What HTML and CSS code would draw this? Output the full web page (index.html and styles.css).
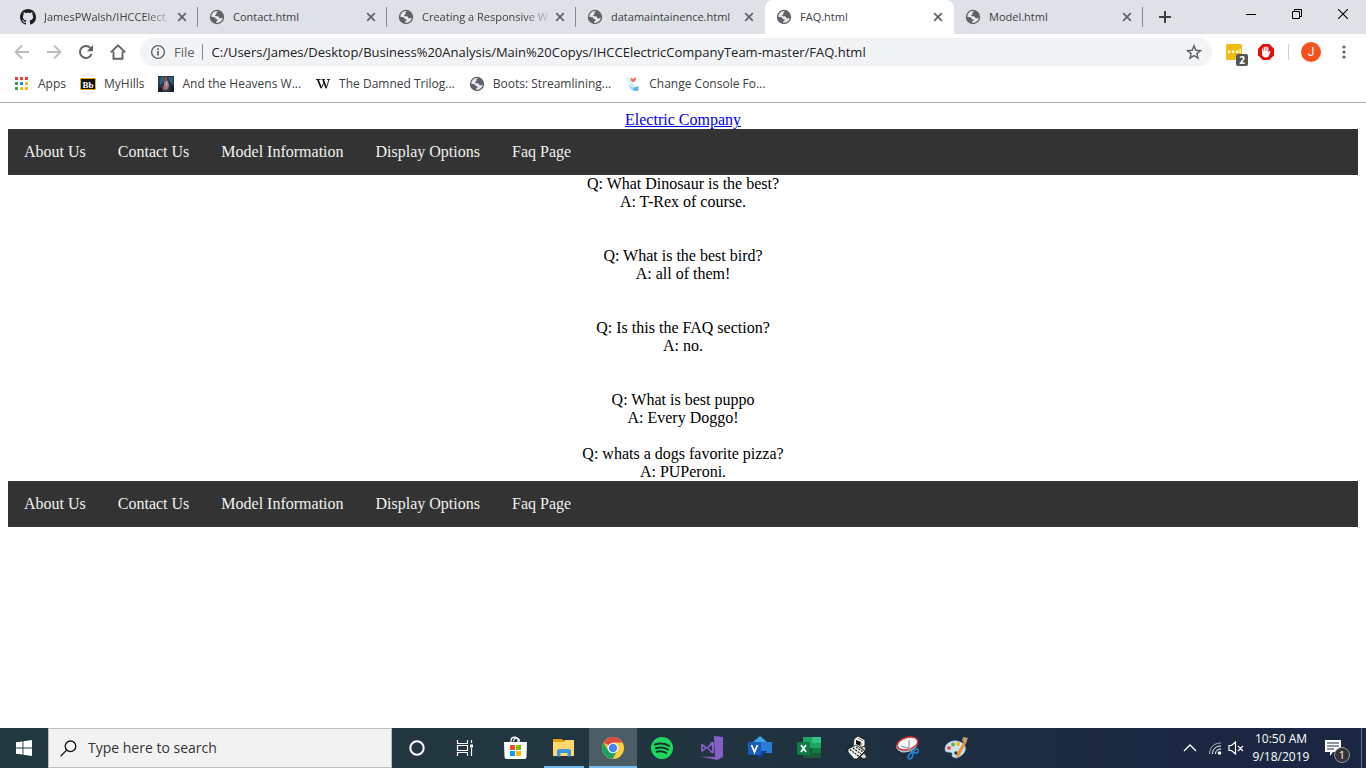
FILE: index.html
```html
<!DOCTYPE html>
<html lang="en">
<head>
<meta charset="utf-8">
<title>FAQ.html</title>
<link rel="stylesheet" href="styles.css">
</head>
<body>
<svg class="defs" aria-hidden="true">
  <symbol id="globe" viewBox="0 0 16 16"><circle cx="8" cy="8" r="7.2" fill="#5f6368"/><path d="M9.3 2.2C8 2.4 7.200 3.400 7.500 4.500c.2.9-1 1-1.300 1.700-.3.8.6 1.200 1.600 1.100 1.300-.1 2.200.2 2.300 1.200.1.800 1 .9 1.900.800.8-.1 1.500-.1 1.800-.8A5.800 5.800 0 0 1 7 13.700c-.1-.8.3-1.600 1.100-1.800.9-.3.700-1.500-.3-1.700-1.400-.2-1.500-1.800-2.700-2L2.200 7.800A5.900 5.900 0 0 1 9.300 2.200z" fill="#e8eaed"/></symbol>
  <symbol id="close" viewBox="0 0 10 10"><path d="M1.200 1.200l7.600 7.600M8.800 1.200L1.200 8.800" stroke="#5f6368" stroke-width="1.700"/></symbol>
</svg>
<div class="screen">
  <header class="browser">
    <div class="tabstrip">
      <div class="tab">
        <svg class="icon16" viewBox="0 0 16 16"><path fill="#1b1f23" d="M8 0C3.580 0 0 3.580 0 8c0 3.540 2.290 6.530 5.470 7.590.4.070.55-.17.55-.38 0-.19-.01-.82-.01-1.490-2.010.37-2.530-.49-2.690-.94-.09-.23-.48-.94-.82-1.130-.28-.15-.68-.52-.01-.53.63-.01 1.080.58 1.230.82.72 1.210 1.870.87 2.330.66.070-.52.280-.87.510-1.070-1.780-.2-3.640-.89-3.640-3.950 0-.87.310-1.590.82-2.150-.08-.2-.36-1.020.08-2.120 0 0 .67-.21 2.200.82.640-.18 1.320-.27 2-.27s1.360.09 2 .27c1.530-1.040 2.200-.82 2.200-.82.440 1.100.160 1.920.080 2.120.51.560.82 1.270.82 2.150 0 3.070-1.870 3.750-3.650 3.950.29.25.54.730.54 1.480 0 1.070-.01 1.930-.01 2.200 0 .21.15.46.55.38A8.010 8.010 0 0 0 16 8c0-4.420-3.580-8-8-8z"/></svg>
        <a class="tab-title fade" href="#">JamesPWalsh/IHCCElect</a>
        <button class="tab-close" aria-label="Close tab"><svg><use href="#close"/></svg></button>
      </div>
      <div class="tab">
        <svg class="icon16"><use href="#globe"/></svg>
        <a class="tab-title" href="#">Contact.html</a>
        <button class="tab-close" aria-label="Close tab"><svg><use href="#close"/></svg></button>
      </div>
      <div class="tab">
        <svg class="icon16"><use href="#globe"/></svg>
        <a class="tab-title fade" href="#">Creating a Responsive W</a>
        <button class="tab-close" aria-label="Close tab"><svg><use href="#close"/></svg></button>
      </div>
      <div class="tab before-active">
        <svg class="icon16"><use href="#globe"/></svg>
        <a class="tab-title" href="#">datamaintainence.html</a>
        <button class="tab-close" aria-label="Close tab"><svg><use href="#close"/></svg></button>
      </div>
      <div class="tab active">
        <svg class="icon16"><use href="#globe"/></svg>
        <a class="tab-title" href="#">FAQ.html</a>
        <button class="tab-close" aria-label="Close tab"><svg><use href="#close"/></svg></button>
      </div>
      <div class="tab">
        <svg class="icon16"><use href="#globe"/></svg>
        <a class="tab-title" href="#">Model.html</a>
        <button class="tab-close" aria-label="Close tab"><svg><use href="#close"/></svg></button>
      </div>
      <button class="new-tab" aria-label="New tab"><svg width="12" height="12" viewBox="0 0 12 12"><path d="M6 0v12M0 6h12" stroke="#3c4043" stroke-width="2"/></svg></button>
      <div class="window-buttons">
        <button aria-label="Minimize"><svg width="10" height="10" viewBox="0 0 10 10"><path d="M0 5.500h10" stroke="#000"/></svg></button>
        <button aria-label="Restore"><svg width="10" height="10" viewBox="0 0 10 10"><path d="M.5 2.500h7v7h-7zM2.500 2.500v-2h7v7h-2" fill="none" stroke="#000"/></svg></button>
        <button aria-label="Close"><svg width="10" height="10" viewBox="0 0 10 10"><path d="M0 0l10 10M10 0L0 10" stroke="#000" stroke-width="1.100"/></svg></button>
      </div>
    </div>

    <div class="toolbar">
      <div class="nav-buttons">
        <button aria-label="Back"><svg width="16" height="16" viewBox="0 0 16 16"><path d="M15 8H2M8 1.500L1.500 8 8 14.500" fill="none" stroke="#babcbe" stroke-width="1.800"/></svg></button>
        <button aria-label="Forward"><svg width="16" height="16" viewBox="0 0 16 16"><path d="M1 8h13M8 1.500L14.500 8 8 14.500" fill="none" stroke="#babcbe" stroke-width="1.800"/></svg></button>
        <button aria-label="Reload"><svg width="16" height="16" viewBox="0 0 16 16"><path d="M13.600 10A6 6 0 1 1 12.400 3.900" fill="none" stroke="#5f6368" stroke-width="2"/><path d="M15 1v6.200H8.800z" fill="#5f6368"/></svg></button>
        <button aria-label="Home"><svg width="16" height="16" viewBox="0 0 16 16"><path d="M3.500 7.500v7.300h9V7.500M.8 8.400L8 1.400l7.200 7" fill="none" stroke="#5f6368" stroke-width="1.900"/></svg></button>
      </div>
      <div class="omnibox">
        <svg width="16" height="16" viewBox="0 0 16 16"><circle cx="8" cy="8" r="6.400" fill="none" stroke="#5f6368" stroke-width="1.400"/><path d="M8 7v4.500M8 4.300v1.600" stroke="#5f6368" stroke-width="1.700"/></svg>
        <label class="scheme" for="address">File</label>
        <input id="address" type="text" value="C:/Users/James/Desktop/Business%20Analysis/Main%20Copys/IHCCElectricCompanyTeam-master/FAQ.html">
        <button aria-label="Bookmark this page"><svg width="16" height="16" viewBox="0 0 16 16"><path d="M8 1.900l1.800 4.300 4.700.4-3.600 3 1.100 4.500L8 11.700l-4 2.400 1.100-4.500-3.600-3 4.700-.4z" fill="none" stroke="#5f6368" stroke-width="1.500"/></svg></button>
      </div>
      <div class="extensions">
        <button class="notes" aria-label="Notes extension"><svg width="16" height="16" viewBox="0 0 16 16"><rect width="16" height="16" rx="1.500" fill="#f0bd12"/><path d="M2 6.500h2.500V9H2zM6 6.500h2.500V9H6zM10 6.500h2.500V9H10zM13.500 5H15v4h-1.500z" fill="#fff7d0"/></svg><span class="badge">2</span></button>
        <button aria-label="Ad blocker"><svg width="16" height="16" viewBox="0 0 16 16"><path d="M4.700 0h6.600L16 4.700v6.600L11.300 16H4.700L0 11.300V4.700z" fill="#e40d0d"/><path d="M4 8.200V5.100c0-.9 1.200-.9 1.200 0V7h.5V3.500c0-1 1.300-1 1.300 0V7h.4V2.900c0-1 1.300-1 1.300 0V7h.5V3.600c0-1 1.200-1 1.200 0v5.200l.8-1.300c.5-.8 1.500-.3 1.100.5L11 11.600c-.6 1.400-1.500 1.900-3 1.900-2.700 0-4-1.500-4-3.800z" fill="#fff"/></svg></button>
      </div>
      <button class="avatar" aria-label="Profile J">J</button>
      <button class="menu" aria-label="Menu"><svg width="4" height="16" viewBox="0 0 4 16"><g fill="#5f6368"><circle cx="2" cy="3" r="1.600"/><circle cx="2" cy="8" r="1.600"/><circle cx="2" cy="13" r="1.600"/></g></svg></button>
    </div>

    <nav class="bookmarks" aria-label="Bookmarks">
      <a href="#"><svg class="icon16" viewBox="0 0 16 16"><path d="M1 1h3v3H1zM6 1h3v3H6zM11 1h3v3h-3z" fill="#ea4335"/><path d="M1 6h3v3H1zM1 11h3v3H1z" fill="#34a853"/><path d="M6 6h3v3H6z" fill="#1a85f0"/><path d="M11 6h3v3h-3zM6 11h3v3H6zM11 11h3v3h-3z" fill="#fbb90c"/></svg>Apps</a>
      <a href="#"><svg class="icon16" viewBox="0 0 16 16"><rect x=".5" y="2.500" width="15" height="11" fill="#111" stroke="#e9b515"/><text x="8" y="11.500" text-anchor="middle" class="bb">Bb</text></svg>MyHills</a>
      <a href="#"><svg class="icon16" viewBox="0 0 16 16"><path fill="#29374c" d="M0 0h16v16H0z"/><path d="M1 2l5-2 1 5-5 4zM10 1h5v7l-4-3z" fill="#315d78"/><path d="M7 3l3 2 1 5-2 4-4-1 1-5z" fill="#a37d83"/><path d="M7 1h2v4H7zM5 10l2 1-1 4H4z" fill="#c3473f"/><path d="M0 11l4 1 2 4H0zM13 9l3 1v6h-4z" fill="#171d32"/><path d="M8 5l1 3-1 3z" fill="#d9cec4"/></svg>And the Heavens W...</a>
      <a href="#"><svg class="icon16" viewBox="0 0 16 16"><path d="M1 3.500h4.500M6.500 3.500H10M12 3.500h3" stroke="#111" stroke-width=".9"/><path d="M2.800 3.500l3.300 8.300M8 3.500l3.200 8.300" stroke="#111" stroke-width="1.700"/><path d="M6.100 12.500l3-6.200M11.200 12.500l2.800-9" stroke="#111" stroke-width=".9"/></svg>The Damned Trilog...</a>
      <a href="#"><svg class="icon16"><use href="#globe"/></svg>Boots: Streamlining...</a>
      <a href="#"><svg class="icon16" viewBox="0 0 16 16"><path d="M1 1l5 1 2 3-2 2-4-2z" fill="#d8eef9"/><path d="M5.500 1.500L8 3l2.500-2 .5 3-3 2.500L6 4.500z" fill="#ed745a"/><path d="M5 7l4 .5 1 3-5-.5z" fill="#cdeaf8"/><path d="M3 9l5 2 6-1-1 5-6-.5z" fill="#a8dcf5"/><path d="M8 12l5-1.500.5 4-4.500.5z" fill="#63b8e8"/></svg>Change Console Fo...</a>
    </nav>
  </header>

  <main class="page">
    <a class="brand" href="#">Electric Company</a>
    <nav class="site-nav"><a href="#">About Us</a><a href="#">Contact Us</a><a href="#">Model Information</a><a href="#">Display Options</a><a href="#">Faq Page</a></nav>
    <div class="faq">
      <p>Q: What Dinosaur is the best?<br>A: T-Rex of course.</p>
      <p>Q: What is the best bird?<br>A: all of them!</p>
      <p>Q: Is this the FAQ section?<br>A: no.</p>
      <p class="near">Q: What is best puppo<br>A: Every Doggo!</p>
      <p>Q: whats a dogs favorite pizza?<br>A: PUPeroni.</p>
    </div>
    <nav class="site-nav"><a href="#">About Us</a><a href="#">Contact Us</a><a href="#">Model Information</a><a href="#">Display Options</a><a href="#">Faq Page</a></nav>
  </main>

  <footer class="taskbar">
    <button class="start" aria-label="Start"><svg width="16" height="16" viewBox="0 0 16 16"><path d="M0 2.300L6.500 1.400v6.100H0zM7.400 1.200L16 0v7.500H7.400zM0 8.400h6.500v6.200L0 13.700zM7.400 8.400H16V16l-8.600-1.200z" fill="#fff"/></svg></button>
    <div class="search">
      <svg width="17" height="17" viewBox="0 0 17 17"><circle cx="10.500" cy="6.300" r="5.300" fill="none" stroke="#111" stroke-width="1.300"/><path d="M6.700 10.100L.6 16.300" stroke="#111" stroke-width="1.300"/></svg>
      <input type="text" aria-label="Search" placeholder="Type here to search">
    </div>
    <div class="apps">
      <button aria-label="Cortana"><svg viewBox="0 0 24 24"><circle cx="12" cy="12" r="6.700" fill="none" stroke="#fff" stroke-width="2"/></svg></button>
      <button aria-label="Task View"><svg viewBox="0 0 24 24"><path d="M3.500 4v3.500h10V4M3.500 20v-3.500h10V20M3.500 9.500h10v5h-10zM17.500 4v3M17.500 12v8" fill="none" stroke="#fff" stroke-width="1.200"/><path d="M16 8.500h3v3h-3z" fill="#fff"/></svg></button>
      <button aria-label="Microsoft Store"><svg viewBox="0 0 24 24"><path d="M8 6V4.500C8 0 15 0 15 4.500V6M10.500 5.500c0-5 6-4 6 0" fill="none" stroke="#fff" stroke-width="1.200"/><path d="M1 6h23l-.5 15c0 1-.8 2-2 2h-18c-1.200 0-2-1-2-2z" fill="#fff"/><path d="M7 9h5v5H7z" fill="#f25022"/><path d="M13 9h5v5h-5z" fill="#7fba00"/><path d="M7 15h5v5H7z" fill="#00a4ef"/><path d="M13 15h5v5h-5z" fill="#ffb900"/></svg></button>
      <button class="open" aria-label="File Explorer"><svg viewBox="0 0 24 24"><path d="M1 3h9l2 2h10v4H1z" fill="#e2a20e"/><path d="M1 6h10l2-2h9v16H1z" fill="#ffd76e"/><path d="M5 20.500V14l2-1h10l2 1v6.500h-3.500V17h-7v3.500z" fill="#3b97d8"/></svg></button>
      <button class="current" aria-label="Google Chrome"><svg viewBox="0 0 24 24"><circle cx="12" cy="12" r="11" fill="#ffcd42"/><path d="M12 12L2.500 6.500a11 11 0 0 1 19 0H12z" fill="#db4c3f"/><path d="M2.500 6.500A11 11 0 0 0 11.500 23l5-8.400L12 12 7.300 14.700z" fill="#1ba260"/><circle cx="12" cy="12" r="5.300" fill="#fff"/><circle cx="12" cy="12" r="4.200" fill="#4285f4"/></svg></button>
      <button aria-label="Spotify"><svg viewBox="0 0 24 24"><circle cx="12" cy="12" r="11" fill="#1ed760"/><path d="M5 8.500c5-1.500 10-1 14 1.400M6 12.300c4-1.300 8.300-.8 11.800 1.200M6.700 15.800c3.500-.9 6.700-.5 9.500 1.200" fill="none" stroke="#183328" stroke-width="2" stroke-linecap="round"/></svg></button>
      <button aria-label="Visual Studio"><svg viewBox="0 0 24 24"><path d="M15 0l9 1v20l-6 3L1 20.500l15 .5z" fill="#865fc5"/><path d="M3 7.500l5 3.800 5-5.800 2 1v10l-2 1-5-5.300-5 3.800-1-1v-6.500zm.8 2.800v3L6 11.900zm9.200-1L9.500 12l3.500 2.900z" fill="#865fc5" fill-rule="evenodd"/></svg></button>
      <button aria-label="Visio"><svg viewBox="0 0 24 24"><path d="M12 0l7 6-7 7-7-7z" fill="#41a5ee"/><path d="M12 6h12v11H12z" fill="#2b7cd3"/><path d="M5 15h14l-7 8z" fill="#103f91"/><rect y="6" width="13" height="13" rx="1" fill="#185abd"/><path d="M3.500 9l3 7 3-7" fill="none" stroke="#fff" stroke-width="1.800"/></svg></button>
      <button aria-label="Excel"><svg viewBox="0 0 24 24"><path d="M6 1h18v21H6z" fill="#21a366"/><path d="M15 1h9v6h-9z" fill="#33c481"/><path d="M6 12h18v10H6z" fill="#185c37"/><path d="M15 12h9v5h-9z" fill="#107c41"/><rect y="6" width="13" height="13" rx="1" fill="#107c41"/><path d="M4 9l5 7M9 9l-5 7" stroke="#fff" stroke-width="1.700"/></svg></button>
      <button aria-label="Typewriter"><svg viewBox="0 0 24 24"><path d="M8 3l4-3 7 4v5l-4 5-8-3z" fill="#f4f4f2" stroke="#111" stroke-width=".8"/><path d="M10 4l5 2-1 4-4-2z" fill="#111"/><path d="M12 2l5 3M16 7l-2 5" stroke="#888"/><path d="M2 13l8-4 9 6-8 8H8l-6-7z" fill="#f1f1ef" stroke="#111" stroke-width=".8"/><path d="M4 13.500l9 7M7 12l8 6M10 11l7 5" stroke="#111" stroke-width="1.100" stroke-dasharray="2 1"/><path d="M15 11l4-1 1 4-2 1z" fill="#bbb" stroke="#111" stroke-width=".6"/><path d="M14 21l4-4 3 4-3 2z" fill="#ddd" stroke="#111" stroke-width=".8"/></svg></button>
      <button aria-label="Snipping Tool"><svg viewBox="0 0 24 24"><ellipse cx="12" cy="9" rx="11" ry="7" transform="rotate(-16 12 9)" fill="#b5bec3"/><ellipse cx="12.500" cy="7.500" rx="10.500" ry="6" transform="rotate(-16 12.500 7.500)" fill="#f6f7f8" stroke="#d92d35" stroke-width="1.500"/><path d="M14 4v10l5 3M6 10l10 3 5 1" fill="none" stroke="#999" stroke-width="1.200"/><ellipse cx="21" cy="15" rx="2.500" ry="2" fill="none" stroke="#2384cb" stroke-width="1.700"/><ellipse cx="15.500" cy="20" rx="2" ry="3" transform="rotate(25 15.500 20)" fill="none" stroke="#2384cb" stroke-width="1.700"/><path d="M16 17l3-2" stroke="#2384cb" stroke-width="2"/></svg></button>
      <button aria-label="Paint"><svg viewBox="0 0 24 24"><path d="M1 13C1 8 7 4 13 5c8 1 11 8 6 13-3 3-7 5-10 3-2-1 0-3-1-4-2-2-7 1-7-4z" fill="#cee4f1" stroke="#8eb7ce" stroke-width=".7"/><circle cx="5" cy="12" r="2" fill="#e5534b"/><circle cx="9" cy="8.500" r="2" fill="#64b33c"/><circle cx="14" cy="8" r="2" fill="#f4b71b"/><circle cx="12" cy="17" r="1.700" fill="#22363f"/><path d="M21 4l2 1-7 14-4 4 1-6z" fill="#eb9133"/><path d="M19 1l5 1-2 5-4-2z" fill="#c39b6c"/></svg></button>
    </div>
    <div class="tray">
      <button class="caret" aria-label="Show hidden icons"><svg width="14" height="12" viewBox="0 0 14 12"><path d="M1 9l6-6 6 6" fill="none" stroke="#fff" stroke-width="1.300"/></svg></button>
      <button aria-label="Network"><svg width="14" height="14" viewBox="0 0 14 14"><g fill="none" stroke="#fff"><path d="M1.500 13C1.500 6.500 6 2 13 2" stroke="#aab3c1"/><path d="M4.500 13c0-5 3.500-8 8.500-8M7.500 13c0-3.500 2.500-5 5.500-5"/></g><circle cx="11.500" cy="12" r="1.800" fill="#fff"/></svg></button>
      <button aria-label="Volume muted"><svg width="16" height="14" viewBox="0 0 16 14"><path d="M1 4.500h2.500L7.500 1v12L3.500 9.500H1zM10 5l5 5M15 5l-5 5" fill="none" stroke="#fff" stroke-width="1.200"/></svg></button>
      <time class="clock" datetime="2019-09-18T10:50">10:50 AM<br>9/18/2019</time>
      <button class="notifications" aria-label="Notifications"><svg width="16" height="16" viewBox="0 0 16 16"><path d="M0 0h16v12H8l-3 4v-4H0z" fill="#fff"/><path d="M2 3h12M2 6h12M2 9h7" stroke="#1c2941"/></svg><span class="count">1</span></button>
    </div>
  </footer>
</div>
</body>
</html>
```
FILE: styles.css
```css
* { box-sizing: border-box; }
body { margin: 0; background: #fff; }
button { border: 0; padding: 0; background: none; font: inherit; color: inherit; display: flex; align-items: center; justify-content: center; flex: none; }
input { border: 0; padding: 0; background: none; outline: none; min-width: 0; flex: 1; }
svg { display: block; flex: none; }
.defs { position: absolute; width: 0; height: 0; }
.icon16 { width: 16px; height: 16px; }
.screen { min-height: 100vh; display: flex; flex-direction: column; }

.browser { font: 12px/16px "Open Sans", "Noto Sans", sans-serif; color: #3c4043; border-bottom: 1px solid #b0b1b2; }
.tabstrip { display: flex; height: 34px; padding-left: 9px; background: #dee1e6; }
.tab { position: relative; display: flex; align-items: center; flex: 0 1 189px; min-width: 0; padding: 0 10px 0 11px; }
.tab::after { content: ""; position: absolute; right: 0; top: 7px; width: 1px; height: 20px; background: #85888c; }
.tab.active::after, .tab.before-active::after { display: none; }
.tab.active { background: #fff; border-radius: 8px 8px 0 0; }
.tab-title { flex: 1; min-width: 0; margin: 0 2px 0 8px; overflow: hidden; white-space: nowrap; font-size: 11px; color: #3c4043; text-decoration: none; }
.fade { -webkit-mask-image: linear-gradient(to right, #000 78%, transparent); mask-image: linear-gradient(to right, #000 78%, transparent); }
.tab-close { width: 12px; height: 16px; }
.tab-close svg { width: 10px; height: 10px; }
.new-tab { width: 44px; }
.window-buttons { display: flex; margin-left: auto; height: 28px; }
.window-buttons button { width: 46px; }

.toolbar { display: flex; align-items: center; height: 36px; padding-right: 12px; }
.nav-buttons { display: flex; gap: 16px; padding: 0 14px; }
.omnibox { flex: 1; min-width: 0; display: flex; align-items: center; height: 28px; border-radius: 14px; background: #f1f3f4; padding: 0 10px; }
.scheme { font-size: 13px; color: #5f6368; margin-left: 8px; padding-right: 7px; border-right: 1px solid #85888c; }
.omnibox input { margin-left: 9px; font: 13px/20px "Open Sans", "Noto Sans", sans-serif; color: #202124; }
.extensions { display: flex; gap: 16px; padding: 0 14px; border-right: 1px solid #cfd1d4; }
.notes { position: relative; }
.badge { position: absolute; left: 10px; top: 10px; width: 12px; height: 12px; border-radius: 2px; background: #555; color: #fff; font: bold 10px/12px "Open Sans", sans-serif; text-align: center; }
.avatar { width: 20px; height: 20px; margin: 0 13px 0 12px; border-radius: 50%; background: #f4511e; color: #fff; font: 12px/20px Roboto, sans-serif; }
.menu { width: 20px; }

.bookmarks { display: flex; align-items: center; height: 32px; padding: 0 14px 4px; gap: 14px; }
.bookmarks a { display: flex; align-items: center; gap: 8px; color: #3c4043; text-decoration: none; white-space: nowrap; }
.bb { font: bold 9px "Liberation Serif", serif; fill: #fff; }

.page { flex: 1; padding: 8px; font: 16px/18px "Liberation Serif", "Times New Roman", serif; color: #000; text-align: center; }
.brand { color: #0000ee; }
.site-nav { display: flex; flex-wrap: wrap; background: #333; }
.site-nav a { padding: 14px 16px; color: #f2f2f2; text-decoration: none; }
.faq { display: flex; flex-direction: column; gap: 36px; }
.faq p { margin: 0; }
.faq .near { margin-bottom: -18px; }

.taskbar { display: flex; height: 40px; background: linear-gradient(to right, #22393f, #213540 50%, #1b2842 85%, #1a2642); font-family: "Open Sans", "Noto Sans", sans-serif; color: #fff; }
.start { width: 48px; }
.search { display: flex; align-items: center; flex: 0 1 344px; min-width: 0; padding: 0 11px; gap: 11px; background: #f2f2f2; border: 1px solid #bcbcbc; }
.search input { font: 14px/20px "Open Sans", "Noto Sans", sans-serif; }
.search input::placeholder { color: #333; opacity: 1; }
.apps { display: flex; gap: 1px; padding-left: 1px; }
.apps button { width: 48px; }
.apps svg { width: 24px; height: 24px; }
.open { background: linear-gradient(#76b9ed, #76b9ed) center bottom / 40px 2px no-repeat; }
.apps .current { background: linear-gradient(#76b9ed, #76b9ed) center bottom / 100% 2px no-repeat #4d5d66; }
.tray { display: flex; align-items: center; margin-left: auto; gap: 5px; padding-right: 4px; }
.tray button { min-width: 16px; }
.tray .caret { margin-right: 4px; }
.clock { width: 64px; font-size: 12px; line-height: 18px; text-align: center; white-space: nowrap; }
.tray .notifications { position: relative; align-self: stretch; width: 44px; padding-right: 14px; border-right: 1px solid #6c7588; }
.count { position: absolute; left: 16px; top: 19px; width: 16px; height: 16px; border-radius: 50%; background: #333; border: 1px solid #999; font-size: 11px; line-height: 14px; color: #fff; }
```
